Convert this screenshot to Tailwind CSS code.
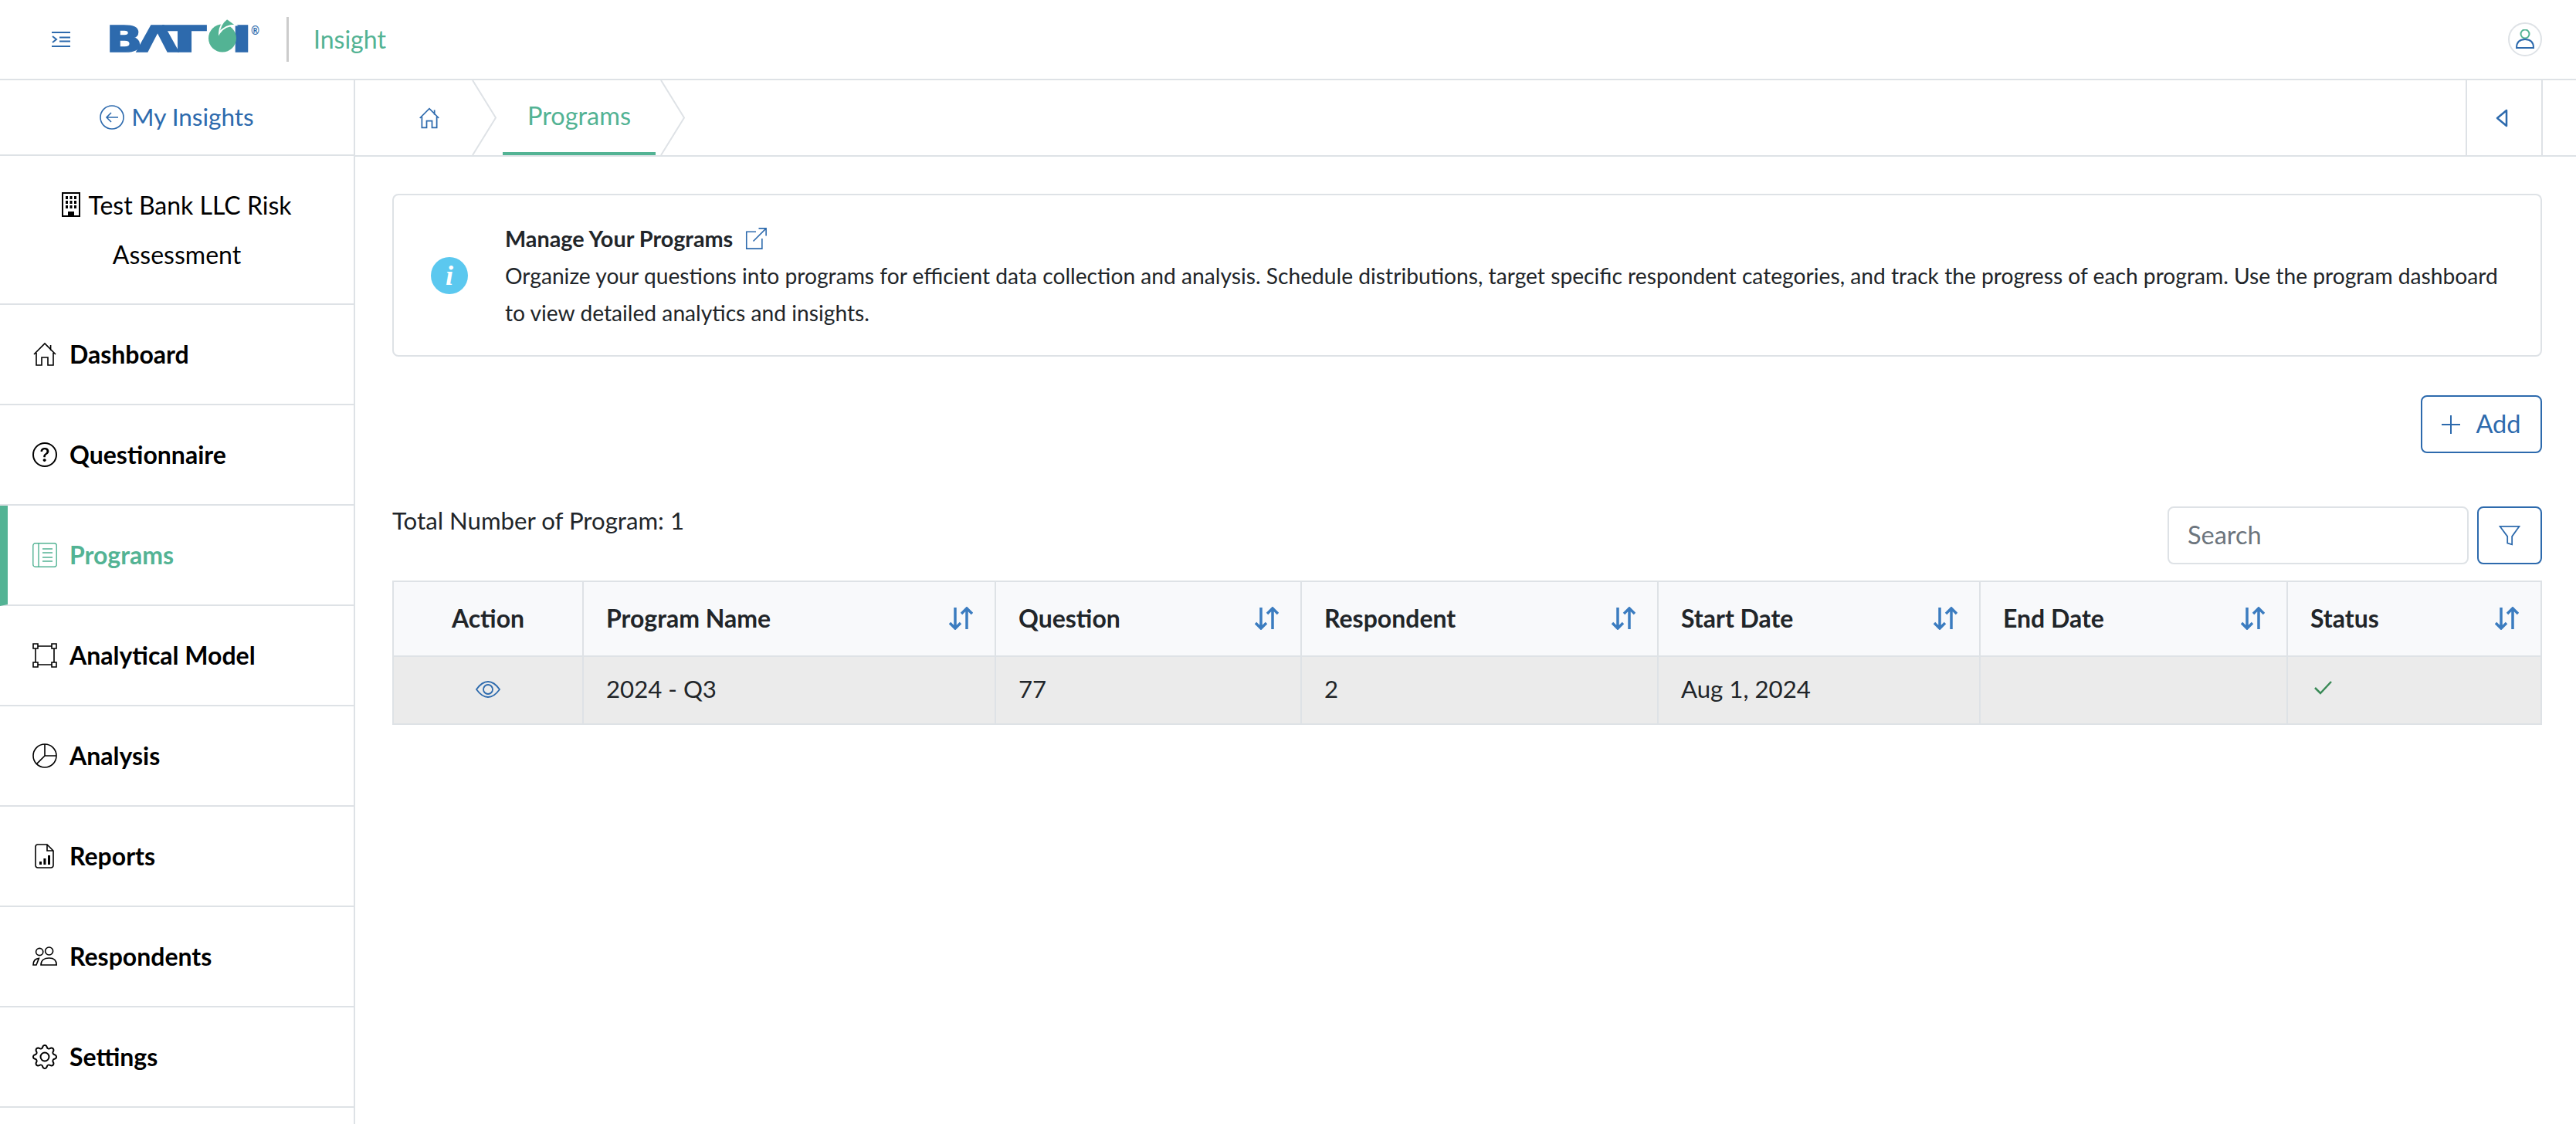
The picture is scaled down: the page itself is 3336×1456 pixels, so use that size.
<!DOCTYPE html>
<html lang="en">
<head>
  <meta charset="utf-8"/>
  <title>Programs</title>
  <script src="https://cdn.jsdelivr.net/npm/@tailwindcss/browser@4"></script>
</head>
<body class="h-[1456px] overflow-hidden bg-white font-['Lato',sans-serif] text-[#212529]">
  <!-- top bar -->
  <header class="flex h-[104px] items-center border-b-2 border-[#dee2e6] pl-[67px] pr-[44px]">
    <svg class="w-[24px] h-[20px] text-[#2d6aad]" viewBox="0 0 24 20" fill="none" stroke="currentColor" stroke-width="2">
      <path d="M0 1h24M10 7.5h14M10 12.5h14M0 19h24M1 6l5 4-5 4"/>
    </svg>
    <svg class="mb-[4px] ml-[44px] h-[62px] w-[206px]" viewBox="-6 -6 206 62" font-family="DejaVu Sans" font-weight="700" font-size="47" fill="#2d6aad" stroke="#2d6aad" stroke-width="1.500">
      <text x="-3.500" y="43" textLength="47" lengthAdjust="spacingAndGlyphs">B</text>
      <text x="36" y="43" textLength="54" lengthAdjust="spacingAndGlyphs">Λ</text>
      <text x="70" y="43" textLength="56" lengthAdjust="spacingAndGlyphs">T</text>
      <text x="158" y="43" textLength="28" lengthAdjust="spacingAndGlyphs">I</text>
      <circle cx="147" cy="25.500" r="18" fill="#53b394" stroke="none"/>
      <path d="M143 19C143 10 148 4 153 0l11.500 8.500C156 8.500 148 11 143 19z" fill="#53b394" stroke="#fff" stroke-width="2"/>
      <text x="183" y="21" font-size="16" font-weight="400" stroke-width="0.300" textLength="13" lengthAdjust="spacingAndGlyphs">®</text>
    </svg>
    <div class="ml-[30px] h-[58px] w-[3px] bg-[#cccccc]"></div>
    <span class="ml-[32px] text-[32px] text-[#53b394]">Insight</span>
    <div class="ml-auto flex size-[44px] items-center justify-center rounded-full border-2 border-[#dee2e6]">
      <svg class="size-[26px]" viewBox="0 0 26 26" fill="none" stroke-width="2">
        <circle cx="13" cy="6" r="5.5" stroke="#53b394"/>
        <path d="M2 24c0-7 4-11 11-11s11 4 11 11z" stroke="#2d6aad"/>
      </svg>
    </div>
  </header>

  <div class="flex h-[1352px]">
    <!-- sidebar -->
    <aside class="w-[460px] shrink-0 border-r-2 border-[#dee2e6]">
      <a class="flex h-[98px] items-center justify-center gap-[9px] border-b-2 border-[#dee2e6] text-[31.500px] text-[#2d6aad]">
        <svg class="size-[32px]" viewBox="0 0 16 16" fill="none" stroke="currentColor" stroke-width="0.8">
          <circle cx="8" cy="8" r="7.5"/>
          <path d="M12 8H4.5M7.5 5 4.5 8l3 3"/>
        </svg>
        My Insights
      </a>
      <div class="h-[193px] border-b-2 border-[#dee2e6] px-[40px] pt-[32px] text-center text-[32px] leading-[64px] text-black">
        <svg class="mr-[10px] inline-block h-[32px] w-[24px] align-[-3px]" viewBox="0 0 24 32">
          <path d="M1 1h22v30H1z" fill="none" stroke="#000" stroke-width="2"/>
          <path d="M5 5h3v4H5zM10.500 5h3v4h-3zM16 5h3v4h-3zM5 11h3v4H5zM10.500 11h3v4h-3zM16 11h3v4h-3zM5 17h3v4H5zM10.500 17h3v4h-3zM16 17h3v4h-3zM8 25h8v6H8z" fill="#000"/>
        </svg>Test Bank LLC Risk Assessment
      </div>
      <nav class="text-[32px] font-bold text-black">
        <a class="flex h-[130px] items-center gap-[16px] border-b-2 border-[#dee2e6] pl-[42px]">
          <svg class="size-[32px]" viewBox="0 0 16 16" fill="none" stroke="currentColor" stroke-width="0.8">
            <path d="M1 8 8 1l7 7M2.500 7v8H6v-5h4v5h3.500V7M11.800 2v3.500"/>
          </svg>
          Dashboard
        </a>
        <a class="flex h-[130px] items-center gap-[16px] border-b-2 border-[#dee2e6] pl-[42px]">
          <svg class="size-[32px]" viewBox="0 0 16 16" fill="currentColor">
            <path d="M8 15A7 7 0 1 1 8 1a7 7 0 0 1 0 14zm0 1A8 8 0 1 0 8 0a8 8 0 0 0 0 16z"/>
            <path d="M5.255 5.786a.237.237 0 0 0 .241.247h.825c.138 0 .248-.113.266-.25.09-.656.54-1.134 1.342-1.134.686 0 1.314.343 1.314 1.168 0 .635-.374.927-.965 1.371-.673.489-1.206 1.06-1.168 1.987l.003.217a.25.25 0 0 0 .25.246h.811a.25.25 0 0 0 .25-.25v-.105c0-.718.273-.927 1.01-1.486.609-.463 1.244-.977 1.244-2.056 0-1.511-1.276-2.241-2.673-2.241-1.267 0-2.655.59-2.75 2.286zm1.557 5.763c0 .533.425.927 1.01.927.609 0 1.028-.394 1.028-.927 0-.552-.42-.94-1.029-.94-.584 0-1.009.388-1.009.94z"/>
          </svg>
          Questionnaire
        </a>
        <a class="flex h-[130px] items-center gap-[16px] border-b-2 border-l-[10px] border-[#dee2e6] border-l-[#53b394] pl-[32px] text-[#53b394]">
          <svg class="size-[32px]" viewBox="0 0 16 16" fill="none" stroke="currentColor" stroke-width="0.7">
            <rect x="0.400" y="0.400" width="15.200" height="15.200" rx="1.500"/>
            <path d="M4 .4v15.200M6.500 4h6.500M6.500 6.500h6.500M6.500 9.500h6.500M6.500 12h6.500"/>
          </svg>
          Programs
        </a>
        <a class="flex h-[130px] items-center gap-[16px] border-b-2 border-[#dee2e6] pl-[42px]">
          <svg class="size-[32px]" viewBox="0 0 16 16" fill="none" stroke="currentColor" stroke-width="0.8">
            <path d="M.5.500h3v3h-3zM12.500.500h3v3h-3zM.5 12.500h3v3h-3zM12.500 12.500h3v3h-3zM3.500 2h9M3.500 14h9M2 3.500v9M14 3.500v9"/>
          </svg>
          Analytical Model
        </a>
        <a class="flex h-[130px] items-center gap-[16px] border-b-2 border-[#dee2e6] pl-[42px]">
          <svg class="size-[32px]" viewBox="0 0 16 16" fill="none" stroke="currentColor" stroke-width="0.8">
            <circle cx="8" cy="8" r="7.500"/>
            <path d="M8 .5V8h7.500M8 8l-5.300 5.300"/>
          </svg>
          Analysis
        </a>
        <a class="flex h-[130px] items-center gap-[16px] border-b-2 border-[#dee2e6] pl-[42px]">
          <svg class="size-[32px]" viewBox="0 0 16 16" fill="none" stroke="currentColor" stroke-width="0.8">
            <path d="M3.500.5h6L13.500 4.500V14a1.500 1.500 0 0 1-1.500 1.500H3.500A1.500 1.500 0 0 1 2 14V2A1.500 1.500 0 0 1 3.500.5zM9.500.5v4h4"/>
            <path d="M4.500 11.500h1.500v2H4.500zM7.200 9.500h1.500v4H7.200zM10 7.500h1.500v6H10z" fill="currentColor" stroke="none"/>
          </svg>
          Reports
        </a>
        <a class="flex h-[130px] items-center gap-[16px] border-b-2 border-[#dee2e6] pl-[42px]">
          <svg class="size-[32px]" viewBox="0 0 16 16" fill="none" stroke="currentColor" stroke-width="0.8">
            <circle cx="4.600" cy="5" r="2.300"/>
            <circle cx="10.800" cy="4.500" r="2.500"/>
            <path d="M5.500 13.500c0-3 2.300-4.500 5.300-4.500s4.800 1.500 4.800 4.500zM.5 13.500c0-2.500 1.300-4 3.700-4.300l-1.700 4.300z"/>
          </svg>
          Respondents
        </a>
        <a class="flex h-[130px] items-center gap-[16px] border-b-2 border-[#dee2e6] pl-[42px]">
          <svg class="size-[32px]" viewBox="0 0 16 16" fill="currentColor">
            <path d="M8 4.754a3.246 3.246 0 1 0 0 6.492 3.246 3.246 0 0 0 0-6.492zM5.754 8a2.246 2.246 0 1 1 4.492 0 2.246 2.246 0 0 1-4.492 0z"/>
            <path d="M9.796 1.343c-.527-1.79-3.065-1.79-3.592 0l-.094.319a.873.873 0 0 1-1.255.52l-.292-.16c-1.64-.892-3.433.902-2.54 2.541l.159.292a.873.873 0 0 1-.52 1.255l-.319.094c-1.79.527-1.79 3.065 0 3.592l.319.094a.873.873 0 0 1 .52 1.255l-.16.292c-.892 1.64.901 3.434 2.541 2.54l.292-.159a.873.873 0 0 1 1.255.52l.094.319c.527 1.79 3.065 1.79 3.592 0l.094-.319a.873.873 0 0 1 1.255-.52l.292.16c1.64.893 3.434-.902 2.54-2.541l-.159-.292a.873.873 0 0 1 .52-1.255l.319-.094c1.79-.527 1.79-3.065 0-3.592l-.319-.094a.873.873 0 0 1-.52-1.255l.16-.292c.893-1.64-.902-3.433-2.541-2.54l-.292.159a.873.873 0 0 1-1.255-.52l-.094-.319zm-2.633.283c.246-.835 1.428-.835 1.674 0l.094.319a1.873 1.873 0 0 0 2.693 1.115l.291-.16c.764-.415 1.6.42 1.184 1.185l-.159.292a1.873 1.873 0 0 0 1.116 2.692l.318.094c.835.246.835 1.428 0 1.674l-.319.094a1.873 1.873 0 0 0-1.115 2.693l.16.291c.415.764-.42 1.6-1.185 1.184l-.291-.159a1.873 1.873 0 0 0-2.693 1.116l-.094.318c-.246.835-1.428.835-1.674 0l-.094-.319a1.873 1.873 0 0 0-2.692-1.115l-.292.16c-.764.415-1.6-.42-1.184-1.185l.159-.291A1.873 1.873 0 0 0 1.945 8.93l-.319-.094c-.835-.246-.835-1.428 0-1.674l.319-.094A1.873 1.873 0 0 0 3.06 4.377l-.16-.292c-.415-.764.42-1.6 1.185-1.184l.292.159a1.873 1.873 0 0 0 2.692-1.115l.094-.319z"/>
          </svg>
          Settings
        </a>
      </nav>
    </aside>

    <main class="min-w-0 flex-1">
      <!-- breadcrumb -->
      <div class="flex h-[99px] items-stretch justify-between border-b-2 border-[#dee2e6] pr-[43px]">
        <div class="flex">
          <div class="relative flex w-[183px] items-center pl-[82px]">
            <svg class="h-[28px] w-[28px] text-[#2d6aad]" viewBox="0 0 16 16" fill="none" stroke="currentColor" stroke-width="1">
              <path d="M1 8 8 1l7 7M2.500 7v8H6v-5h4v5h3.500V7M11.800 2v3.500"/>
            </svg>
            <svg class="absolute right-0 top-0 h-[97px] w-[32px]" viewBox="0 0 32 97" fill="none" stroke="#dee2e6" stroke-width="2">
              <path d="M1 0l30 48.500L1 97"/>
            </svg>
          </div>
          <div class="relative flex w-[244px] items-center pl-[8px] text-[32.500px] text-[#53b394]">
            <span class="flex h-full w-[198px] items-center justify-center border-b-4 border-[#53b394]">Programs</span>
            <svg class="absolute right-0 top-0 h-[97px] w-[32px]" viewBox="0 0 32 97" fill="none" stroke="#dee2e6" stroke-width="2">
              <path d="M1 0l30 48.500L1 97"/>
            </svg>
          </div>
        </div>
        <div class="flex w-[100px] items-center justify-center border-x-2 border-[#dee2e6] pr-[6px]">
          <svg class="h-[24px] w-[16px] text-[#2d6aad]" viewBox="0 0 16 24" fill="none" stroke="currentColor" stroke-width="2.500" stroke-linejoin="round">
            <path d="M14 2 2 12l12 10z"/>
          </svg>
        </div>
      </div>

      <div class="pl-[48px] pr-[44px] pt-[48px]">
        <!-- info card -->
        <section class="flex h-[211px] items-center rounded-[8px] border-2 border-[#dee2e6]">
          <div class="ml-[48px] flex size-[48px] shrink-0 items-center justify-center rounded-full bg-[#5bc8ef] font-['Liberation_Serif',serif] text-[36px] font-bold italic text-white">i</div>
          <div class="ml-[48px] pr-[40px] text-[28.200px] leading-[48px]">
            <div class="flex items-center gap-[16px] text-[28.800px] font-bold">
              Manage Your Programs
              <svg class="size-[28px] text-[#2d6aad]" viewBox="0 0 16 16" fill="none" stroke="currentColor" stroke-width="0.9">
                <path d="M8 3H1v12.500h11.500V8M6 10 15.500.5M10 .5h5.500V6"/>
              </svg>
            </div>
            <p>Organize your questions into programs for efficient data collection and analysis. Schedule distributions, target specific respondent categories, and track the progress of each program. Use the program dashboard to view detailed analytics and insights.</p>
          </div>
        </section>

        <div class="mt-[50px] flex justify-end">
          <button class="flex h-[75px] w-[157px] items-center justify-center gap-[20px] rounded-[8px] border-2 border-[#2d6aad] text-[32.500px] text-[#2d6aad]">
            <svg class="size-[24px]" viewBox="0 0 24 24" fill="none" stroke="currentColor" stroke-width="2"><path d="M12 0v24M0 12h24"/></svg>
            Add
          </button>
        </div>

        <div class="mt-[69px] flex items-start justify-between">
          <div class="mt-[-1px] text-[31.200px] leading-[38px]">Total Number of Program: 1</div>
          <div class="flex gap-[11px]">
            <div class="flex h-[75px] w-[390px] items-center rounded-[8px] border-2 border-[#dee2e6] pl-[24px] text-[32.500px] text-[#6c757d]">Search</div>
            <button class="flex h-[75px] w-[84px] items-center justify-center rounded-[8px] border-2 border-[#2d6aad] text-[#2d6aad]">
              <svg class="h-[28px] w-[28px]" viewBox="0 0 16 16" fill="none" stroke="currentColor" stroke-width="1">
                <path d="M.8 1h14.400L9.800 8.500v6l-3.400-1V8.500z"/>
              </svg>
            </button>
          </div>
        </div>

        <!-- programs table -->
        <table class="mt-[21px] w-[2782px] table-fixed border-collapse border-2 border-[#dee2e6] text-[31.200px]">
          <thead class="bg-[#f8f9fb] text-[32px]">
            <tr class="h-[97px] text-left">
              <th class="w-[246px] border-2 border-[#dee2e6] pb-[2px] text-center font-bold">Action</th>
              <th class="w-[534px] border-2 border-[#dee2e6] pb-[2px] pl-[29px] pr-[28px] font-bold">
                <div class="flex items-center justify-between">Program Name
                  <svg class="h-[30px] w-[31px] text-[#3b7cc0]" viewBox="0 0 31 30" fill="none" stroke="currentColor" stroke-width="3.500"><path d="M8 1v27M1 21l7 7 7-7M23 29V2M16 9l7-7 7 7"/></svg>
                </div>
              </th>
              <th class="w-[396px] border-2 border-[#dee2e6] pb-[2px] pl-[29px] pr-[28px] font-bold">
                <div class="flex items-center justify-between">Question
                  <svg class="h-[30px] w-[31px] text-[#3b7cc0]" viewBox="0 0 31 30" fill="none" stroke="currentColor" stroke-width="3.500"><path d="M8 1v27M1 21l7 7 7-7M23 29V2M16 9l7-7 7 7"/></svg>
                </div>
              </th>
              <th class="w-[462px] border-2 border-[#dee2e6] pb-[2px] pl-[29px] pr-[28px] font-bold">
                <div class="flex items-center justify-between">Respondent
                  <svg class="h-[30px] w-[31px] text-[#3b7cc0]" viewBox="0 0 31 30" fill="none" stroke="currentColor" stroke-width="3.500"><path d="M8 1v27M1 21l7 7 7-7M23 29V2M16 9l7-7 7 7"/></svg>
                </div>
              </th>
              <th class="w-[417px] border-2 border-[#dee2e6] pb-[2px] pl-[29px] pr-[28px] font-bold">
                <div class="flex items-center justify-between">Start Date
                  <svg class="h-[30px] w-[31px] text-[#3b7cc0]" viewBox="0 0 31 30" fill="none" stroke="currentColor" stroke-width="3.500"><path d="M8 1v27M1 21l7 7 7-7M23 29V2M16 9l7-7 7 7"/></svg>
                </div>
              </th>
              <th class="w-[398px] border-2 border-[#dee2e6] pb-[2px] pl-[29px] pr-[28px] font-bold">
                <div class="flex items-center justify-between">End Date
                  <svg class="h-[30px] w-[31px] text-[#3b7cc0]" viewBox="0 0 31 30" fill="none" stroke="currentColor" stroke-width="3.500"><path d="M8 1v27M1 21l7 7 7-7M23 29V2M16 9l7-7 7 7"/></svg>
                </div>
              </th>
              <th class="w-[329px] border-2 border-[#dee2e6] pb-[2px] pl-[29px] pr-[28px] font-bold">
                <div class="flex items-center justify-between">Status
                  <svg class="h-[30px] w-[31px] text-[#3b7cc0]" viewBox="0 0 31 30" fill="none" stroke="currentColor" stroke-width="3.500"><path d="M8 1v27M1 21l7 7 7-7M23 29V2M16 9l7-7 7 7"/></svg>
                </div>
              </th>
            </tr>
          </thead>
          <tbody class="bg-[#ebebeb]">
            <tr class="h-[88px]">
              <td class="border-2 border-[#dee2e6] pb-[3px]">
                <svg class="mx-auto h-[22px] w-[32px] text-[#2d6aad]" viewBox="0 0 32 22" fill="none" stroke="currentColor" stroke-width="1.800">
                  <path d="M1 11C6 4 11 1 16 1s10 3 15 10c-5 7-10 10-15 10S6 18 1 11z"/>
                  <circle cx="16" cy="11" r="6"/>
                </svg>
              </td>
              <td class="border-2 border-[#dee2e6] px-[29px] pb-[3px]">2024 - Q3</td>
              <td class="border-2 border-[#dee2e6] px-[29px] pb-[3px]">77</td>
              <td class="border-2 border-[#dee2e6] px-[29px] pb-[3px]">2</td>
              <td class="border-2 border-[#dee2e6] px-[29px] pb-[3px]">Aug 1, 2024</td>
              <td class="border-2 border-[#dee2e6] px-[29px] pb-[3px]"></td>
              <td class="border-2 border-[#dee2e6] px-[29px] pb-[3px]">
                <svg class="mb-[3px] ml-[5px] h-[18px] w-[23px] text-[#3a8a57]" viewBox="0 0 23 18" fill="none" stroke="currentColor" stroke-width="2.500"><path d="M1 9l7 7L22 1"/></svg>
              </td>
            </tr>
          </tbody>
        </table>
      </div>
    </main>
  </div>
</body>
</html>
